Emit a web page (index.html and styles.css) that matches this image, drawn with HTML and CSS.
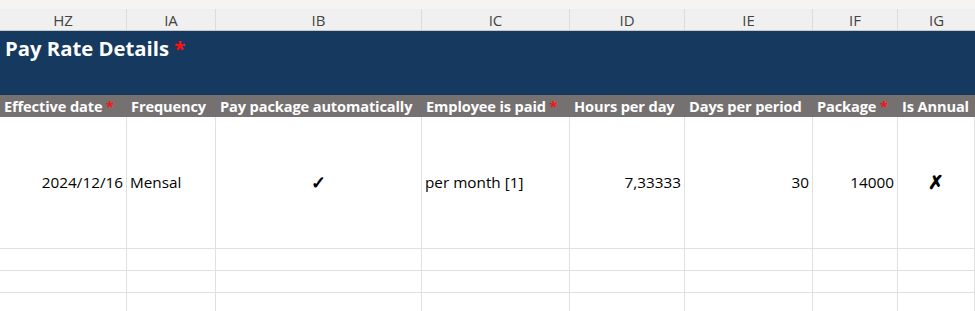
FILE: index.html
```
<!DOCTYPE html>
<html>
<head>
<meta charset="utf-8">
<link rel="stylesheet" href="styles.css">
</head>
<body>
<div class="sheet">
  <div class="topband"></div>
  <div class="grid colheads">
    <div class="ch">HZ</div><div class="ch">IA</div><div class="ch">IB</div><div class="ch">IC</div>
    <div class="ch">ID</div><div class="ch">IE</div><div class="ch">IF</div><div class="ch last">IG</div>
  </div>
  <div class="title">Pay Rate Details <span class="req">*</span></div>
  <div class="grid heads">
    <div class="h">Effective date <span class="req">*</span></div>
    <div class="h">Frequency</div>
    <div class="h">Pay package automatically</div>
    <div class="h">Employee is paid <span class="req">*</span></div>
    <div class="h">Hours per day</div>
    <div class="h">Days per period</div>
    <div class="h">Package <span class="req">*</span></div>
    <div class="h">Is Annual</div>
  </div>
  <div class="grid row data">
    <div class="c r">2024/12/16</div>
    <div class="c">Mensal</div>
    <div class="c m">✓</div>
    <div class="c">per month [1]</div>
    <div class="c r">7,33333</div>
    <div class="c r">30</div>
    <div class="c r">14000</div>
    <div class="c m x">✗</div>
  </div>
  <div class="grid row empty"><div class="c"></div><div class="c"></div><div class="c"></div><div class="c"></div><div class="c"></div><div class="c"></div><div class="c"></div><div class="c"></div></div>
  <div class="grid row empty"><div class="c"></div><div class="c"></div><div class="c"></div><div class="c"></div><div class="c"></div><div class="c"></div><div class="c"></div><div class="c"></div></div>
  <div class="grid row empty"><div class="c"></div><div class="c"></div><div class="c"></div><div class="c"></div><div class="c"></div><div class="c"></div><div class="c"></div><div class="c"></div></div>
</div>
</body>
</html>
```
FILE: styles.css
```
* { box-sizing: border-box; }
html, body { margin: 0; padding: 0; background: #fff; overflow: hidden; }
body { width: 975px; height: 311px; font-family: "Open Sans", "Noto Sans", sans-serif; }
.sheet { width: 975px; }
.topband { height: 9px; background: #f6f4f3; }
.grid { display: grid; grid-template-columns: 127px 89px 206px 148px 115px 128px 85px 77px; }
.colheads { height: 22px; background: #f0f0f0; border-bottom: 1px solid #c8c8c8; }
.ch { display: flex; align-items: center; justify-content: center; font-size: 15px; color: #444; border-right: 1px solid #dcdcdc; line-height: 1; padding-top: 1px; }
.ch.last { border-right: none; }
.title { height: 64px; background: #163a5f; color: #fff; font-weight: 700; font-size: 20.3px; padding: 3px 0 0 5px; line-height: 29px; }
.req { color: #ff1010; }
.heads { height: 22px; background: #757171; }
.h { color: #fff; font-weight: 700; font-size: 14.6px; line-height: 23px; padding-left: 4px; white-space: nowrap; overflow: hidden; letter-spacing: -0.12px; }
.row .c { border-right: 1px solid #e0e0e0; border-bottom: 1px solid #e0e0e0; font-size: 15.3px; color: #000; white-space: nowrap; padding: 0 3px; display: flex; align-items: center; }
.data { height: 132px; }
.data .c { padding-bottom: 2px; }
.empty { height: 22px; }
.c.r { justify-content: flex-end; }
.c.m { justify-content: center; font-size: 18px; font-weight: 700; }
.c.x { font-size: 19px; }
```
